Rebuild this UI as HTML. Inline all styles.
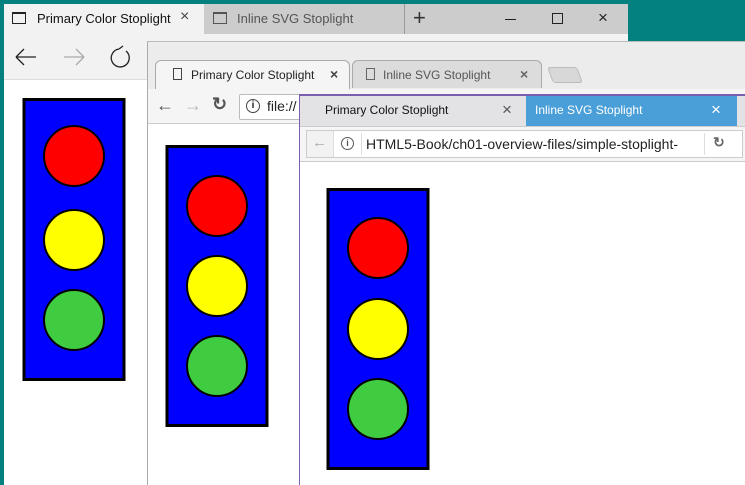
<!DOCTYPE html>
<html><head><meta charset="utf-8"><style>
*{margin:0;padding:0;box-sizing:border-box}
body{width:745px;height:485px;overflow:hidden;background:#038080;position:relative;font-family:"Liberation Sans",sans-serif;font-size:12px;color:#222}
.a{position:absolute}
svg{position:absolute}
</style></head><body>
<!-- Window 1 (Edge) -->
<div class="a" style="left:4px;top:4px;width:624px;height:481px;background:#fff"></div>
<div class="a" style="left:4px;top:4px;width:624px;height:30px;background:#ccc"></div>
<div class="a" style="left:4px;top:4px;width:200px;height:30px;background:#f2f2f2"></div>
<div class="a" style="left:4px;top:34px;width:624px;height:46px;background:#f2f2f2;border-bottom:1px solid #ddd"></div>
<div class="a" style="left:12px;top:12px;width:14px;height:12px;border:1px solid #222;border-top-width:2px"></div>
<div class="a" style="left:37px;top:11px;font-size:13px;color:#111">Primary Color Stoplight</div>
<div class="a" style="left:180px;top:8px;font-size:16px;color:#444">×</div>
<div class="a" style="left:213px;top:12px;width:14px;height:12px;border:1px solid #555;border-top-width:2px"></div>
<div class="a" style="left:237px;top:11px;font-size:13px;color:#555">Inline SVG Stoplight</div>
<div class="a" style="left:404px;top:4px;width:1px;height:30px;background:#999"></div>
<div class="a" style="left:413px;top:5px;font-size:22px;color:#333;font-weight:300">+</div>
<div class="a" style="left:505px;top:19px;width:11px;height:1px;background:#222"></div>
<div class="a" style="left:552px;top:13px;width:11px;height:11px;border:1px solid #222"></div>
<div class="a" style="left:598px;top:8px;font-size:17px;color:#222">×</div>
<svg style="left:0;top:0" width="745" height="485">
<path d="M16 57 H36 M16 57 L24 49 M16 57 L24 65" stroke="#222" stroke-width="1.3" fill="none"/>
<path d="M64 57 H84 M84 57 L76 49 M84 57 L76 65" stroke="#aaa" stroke-width="1.3" fill="none"/>
<path d="M119 49 A9 9 0 1 0 126 51 M119 49 L123 46" stroke="#222" stroke-width="1.3" fill="none"/>
<rect x="24" y="99.5" width="100" height="280" fill="#0000ff" stroke="#000" stroke-width="3"/>
<circle cx="74" cy="156" r="30" fill="#f00" stroke="#000" stroke-width="2"/>
<circle cx="74" cy="240" r="30" fill="#ff0" stroke="#000" stroke-width="2"/>
<circle cx="74" cy="320" r="30" fill="#40cc40" stroke="#000" stroke-width="2"/>
</svg>
<!-- Window 2 (Chrome) -->
<div class="a" style="left:147px;top:41px;width:598px;height:444px;background:#fff;border-left:1px solid #aaa;border-top:1px solid #bbb"></div>
<div class="a" style="left:148px;top:42px;width:597px;height:48px;background:#ececec"></div>
<div class="a" style="left:155px;top:60px;width:195px;height:30px;background:#f5f5f5;border:1px solid #aaa;border-bottom:none;border-radius:6px 6px 0 0"></div>
<div class="a" style="left:352px;top:60px;width:190px;height:28px;background:#dcdcdc;border:1px solid #aaa;border-bottom:none;border-radius:6px 6px 0 0"></div>
<div class="a" style="left:550px;top:67px;width:30px;height:16px;background:#d8d8d8;border:1px solid #bbb;border-radius:3px;transform:skewX(20deg)"></div>
<div class="a" style="left:191px;top:68px;font-size:12px;color:#222">Primary Color Stoplight</div>
<div class="a" style="left:330px;top:66px;font-size:14px;color:#444;font-weight:bold">×</div>
<div class="a" style="left:383px;top:68px;font-size:12px;color:#555">Inline SVG Stoplight</div>
<div class="a" style="left:520px;top:66px;font-size:14px;color:#666;font-weight:bold">×</div>
<div class="a" style="left:173px;top:68px;width:9px;height:12px;border:1px solid #444"></div>
<div class="a" style="left:366px;top:68px;width:9px;height:12px;border:1px solid #666"></div>
<div class="a" style="left:148px;top:89px;width:597px;height:35px;background:#f5f5f5;border-bottom:1px solid #ccc"></div>
<div class="a" style="left:156px;top:95px;font-size:18px;color:#555">←</div>
<div class="a" style="left:184px;top:95px;font-size:18px;color:#bbb">→</div>
<div class="a" style="left:212px;top:94px;font-size:18px;color:#555;font-weight:bold">↻</div>
<div class="a" style="left:239px;top:94px;width:200px;height:26px;background:#fff;border:1px solid #bbb;border-radius:2px"></div>
<div class="a" style="left:246px;top:99px;width:14px;height:14px;border:1.5px solid #444;border-radius:50%;font-size:10px;text-align:center;line-height:11px;font-weight:bold">i</div>
<div class="a" style="left:267px;top:98px;font-size:14px;color:#222">file://</div>
<svg style="left:0;top:0" width="745" height="485">
<rect x="167" y="146.5" width="100" height="279" fill="#0000ff" stroke="#000" stroke-width="3"/>
<circle cx="217" cy="206" r="30" fill="#f00" stroke="#000" stroke-width="2"/>
<circle cx="217" cy="286" r="30" fill="#ff0" stroke="#000" stroke-width="2"/>
<circle cx="217" cy="366" r="30" fill="#40cc40" stroke="#000" stroke-width="2"/>
</svg>
<!-- Window 3 -->
<div class="a" style="left:299px;top:94px;width:446px;height:391px;background:#fff;border-left:1px solid #7a5fb0;border-top:2px solid #7a5fb0"></div>
<div class="a" style="left:300px;top:96px;width:445px;height:30px;background:#e3e3e5"></div>
<div class="a" style="left:526px;top:96px;width:211px;height:30px;background:#4a9fd8"></div>
<div class="a" style="left:325px;top:103px;font-size:12px;color:#111">Primary Color Stoplight</div>
<div class="a" style="left:502px;top:100px;font-size:17px;color:#555">×</div>
<div class="a" style="left:535px;top:103px;font-size:12px;color:#fff">Inline SVG Stoplight</div>
<div class="a" style="left:711px;top:100px;font-size:17px;color:#fff">×</div>
<div class="a" style="left:300px;top:126px;width:445px;height:36px;background:#f5f5f5;border-top:1px solid #ccc;border-bottom:1px solid #ccc"></div>
<div class="a" style="left:306px;top:130px;width:437px;height:28px;background:#fff;border:1px solid #ccc"></div>
<div class="a" style="left:307px;top:131px;width:27px;height:26px;background:#f2f2f2;border-right:1px solid #ddd"></div>
<div class="a" style="left:312px;top:134px;font-size:15px;color:#aaa;font-weight:bold">←</div>
<div class="a" style="left:341px;top:137px;width:13px;height:13px;border:1.5px solid #555;border-radius:50%;font-size:9px;text-align:center;line-height:10px;font-weight:bold;color:#555">i</div>
<div class="a" style="left:361px;top:133px;width:1px;height:22px;background:#ddd"></div>
<div class="a" style="left:366px;top:136px;font-size:14px;color:#222;width:336px;white-space:nowrap;overflow:hidden">HTML5-Book/ch01-overview-files/simple-stoplight-</div>
<div class="a" style="left:704px;top:133px;width:1px;height:22px;background:#ddd"></div>
<div class="a" style="left:713px;top:134px;font-size:14px;color:#666;font-weight:bold">↻</div>
<svg style="left:0;top:0" width="745" height="485">
<rect x="328" y="189.5" width="100" height="279" fill="#0000ff" stroke="#000" stroke-width="3"/>
<circle cx="378" cy="248" r="30" fill="#f00" stroke="#000" stroke-width="2"/>
<circle cx="378" cy="329" r="30" fill="#ff0" stroke="#000" stroke-width="2"/>
<circle cx="378" cy="409" r="30" fill="#40cc40" stroke="#000" stroke-width="2"/>
</svg>
</body></html>
